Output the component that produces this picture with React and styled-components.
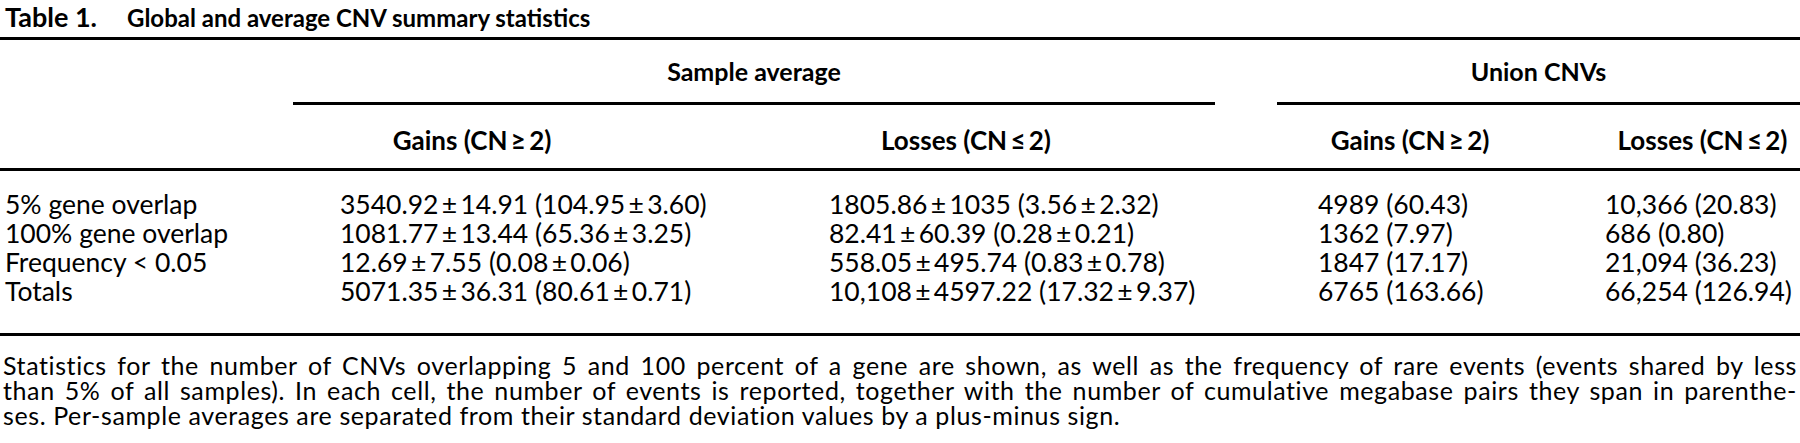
import React from 'react';
import styled, { createGlobalStyle } from 'styled-components';

const GlobalStyle = createGlobalStyle`
  html, body {
    margin: 0;
    padding: 0;
    background: #fff;
  }
  body {
    font-family: Lato, "Open Sans", sans-serif;
    color: #000;
  }
`;

const COLS = '340px 489px 489px 287px 1fr';
const PM = '\u2009±\u2009';

const rows = [
  ['5% gene overlap', `3540.92${PM}14.91 (104.95${PM}3.60)`, `1805.86${PM}1035 (3.56${PM}2.32)`, '4989 (60.43)', '10,366 (20.83)'],
  ['100% gene overlap', `1081.77${PM}13.44 (65.36${PM}3.25)`, `82.41${PM}60.39 (0.28${PM}0.21)`, '1362 (7.97)', '686 (0.80)'],
  ['Frequency < 0.05', `12.69${PM}7.55 (0.08${PM}0.06)`, `558.05${PM}495.74 (0.83${PM}0.78)`, '1847 (17.17)', '21,094 (36.23)'],
  ['Totals', `5071.35${PM}36.31 (80.61${PM}0.71)`, `10,108${PM}4597.22 (17.32${PM}9.37)`, '6765 (163.66)', '66,254 (126.94)'],
];

// right padding of each column's header box, so the label sits where the reference has it
const HEAD_PAD = [0, 225, 215, 103, 0];

const Page = styled.div`
  width: 1800px;
  height: 443px;
  overflow: hidden;
`;

const Title = styled.div`
  display: flex;
  align-items: baseline;
  gap: 30px;
  padding: 2px 5px 0;
  height: 35px;
  font-weight: 700;
  line-height: 30px;
  border-bottom: 3px solid #000;
`;

const TitleNum = styled.span`
  font-size: 27px;
`;

const TitleText = styled.span`
  font-size: 24px;
`;

const Row = styled.div`
  display: grid;
  grid-template-columns: ${COLS};
  padding-top: ${p => p.$pt || 0}px;
  padding-bottom: ${p => p.$pb || 0}px;
  border-bottom: ${p => (p.$rule ? '3px solid #000' : 'none')};
`;

const Body = styled.div`
  display: grid;
  grid-template-columns: ${COLS};
  padding: 19px 0 27px;
  border-bottom: 3px solid #000;
  font-size: 26.5px;
  line-height: 29px;
`;

const Group = styled.div`
  grid-column: ${p => p.$span};
  margin-left: -${p => p.$ml || 0}px;
  padding-right: ${p => p.$pr || 0}px;
`;

const GroupLabel = styled.div`
  text-align: center;
  font-weight: 700;
  font-size: 25px;
  line-height: 30px;
  padding: 16px 0;
  border-bottom: 3px solid #000;
`;

const Head = styled.div`
  padding-right: ${p => p.$pr}px;
  text-align: center;
  font-weight: 700;
  font-size: 26px;
  line-height: 30px;
  white-space: nowrap;
`;

const Cell = styled.div`
  padding-left: ${p => (p.$first ? 5 : 0)}px;
  white-space: nowrap;
`;

const Caption = styled.div`
  padding: 17px 3px 0;
  font-size: 25px;
  letter-spacing: 0.6px;
  line-height: 25px;
`;

const Line = styled.span`
  display: block;
  white-space: nowrap;
  text-align: justify;
  text-align-last: ${p => (p.$last ? 'left' : 'justify')};
`;

export default function App() {
  return (
    <Page>
      <GlobalStyle />
      <Title>
        <TitleNum>Table 1.</TitleNum>
        <TitleText>Global and average CNV summary statistics</TitleText>
      </Title>

      <Row>
        <Group $span="2 / 4" $ml={47} $pr={103}>
          <GroupLabel>Sample average</GroupLabel>
        </Group>
        <Group $span="4 / 6" $ml={41}>
          <GroupLabel>Union CNVs</GroupLabel>
        </Group>
      </Row>

      <Row $pt={20} $pb={13} $rule>
        <Head $pr={0} />
        <Head $pr={HEAD_PAD[1]}>Gains (CN{'\u2009≥\u2009'}2)</Head>
        <Head $pr={HEAD_PAD[2]}>Losses (CN{'\u2009≤\u2009'}2)</Head>
        <Head $pr={HEAD_PAD[3]}>Gains (CN{'\u2009≥\u2009'}2)</Head>
        <Head $pr={HEAD_PAD[4]}>Losses (CN{'\u2009≤\u2009'}2)</Head>
      </Row>

      <Body>
        {rows.map(r =>
          r.map((v, i) => (
            <Cell key={r[0] + i} $first={i === 0}>
              {v}
            </Cell>
          ))
        )}
      </Body>

      <Caption>
        <Line>
          Statistics for the number of CNVs overlapping 5 and 100 percent of a gene are shown, as well as the frequency of rare events (events shared by less
        </Line>
        <Line>
          than 5% of all samples). In each cell, the number of events is reported, together with the number of cumulative megabase pairs they span in parenthe-
        </Line>
        <Line $last>
          ses. Per-sample averages are separated from their standard deviation values by a plus-minus sign.
        </Line>
      </Caption>
    </Page>
  );
}
